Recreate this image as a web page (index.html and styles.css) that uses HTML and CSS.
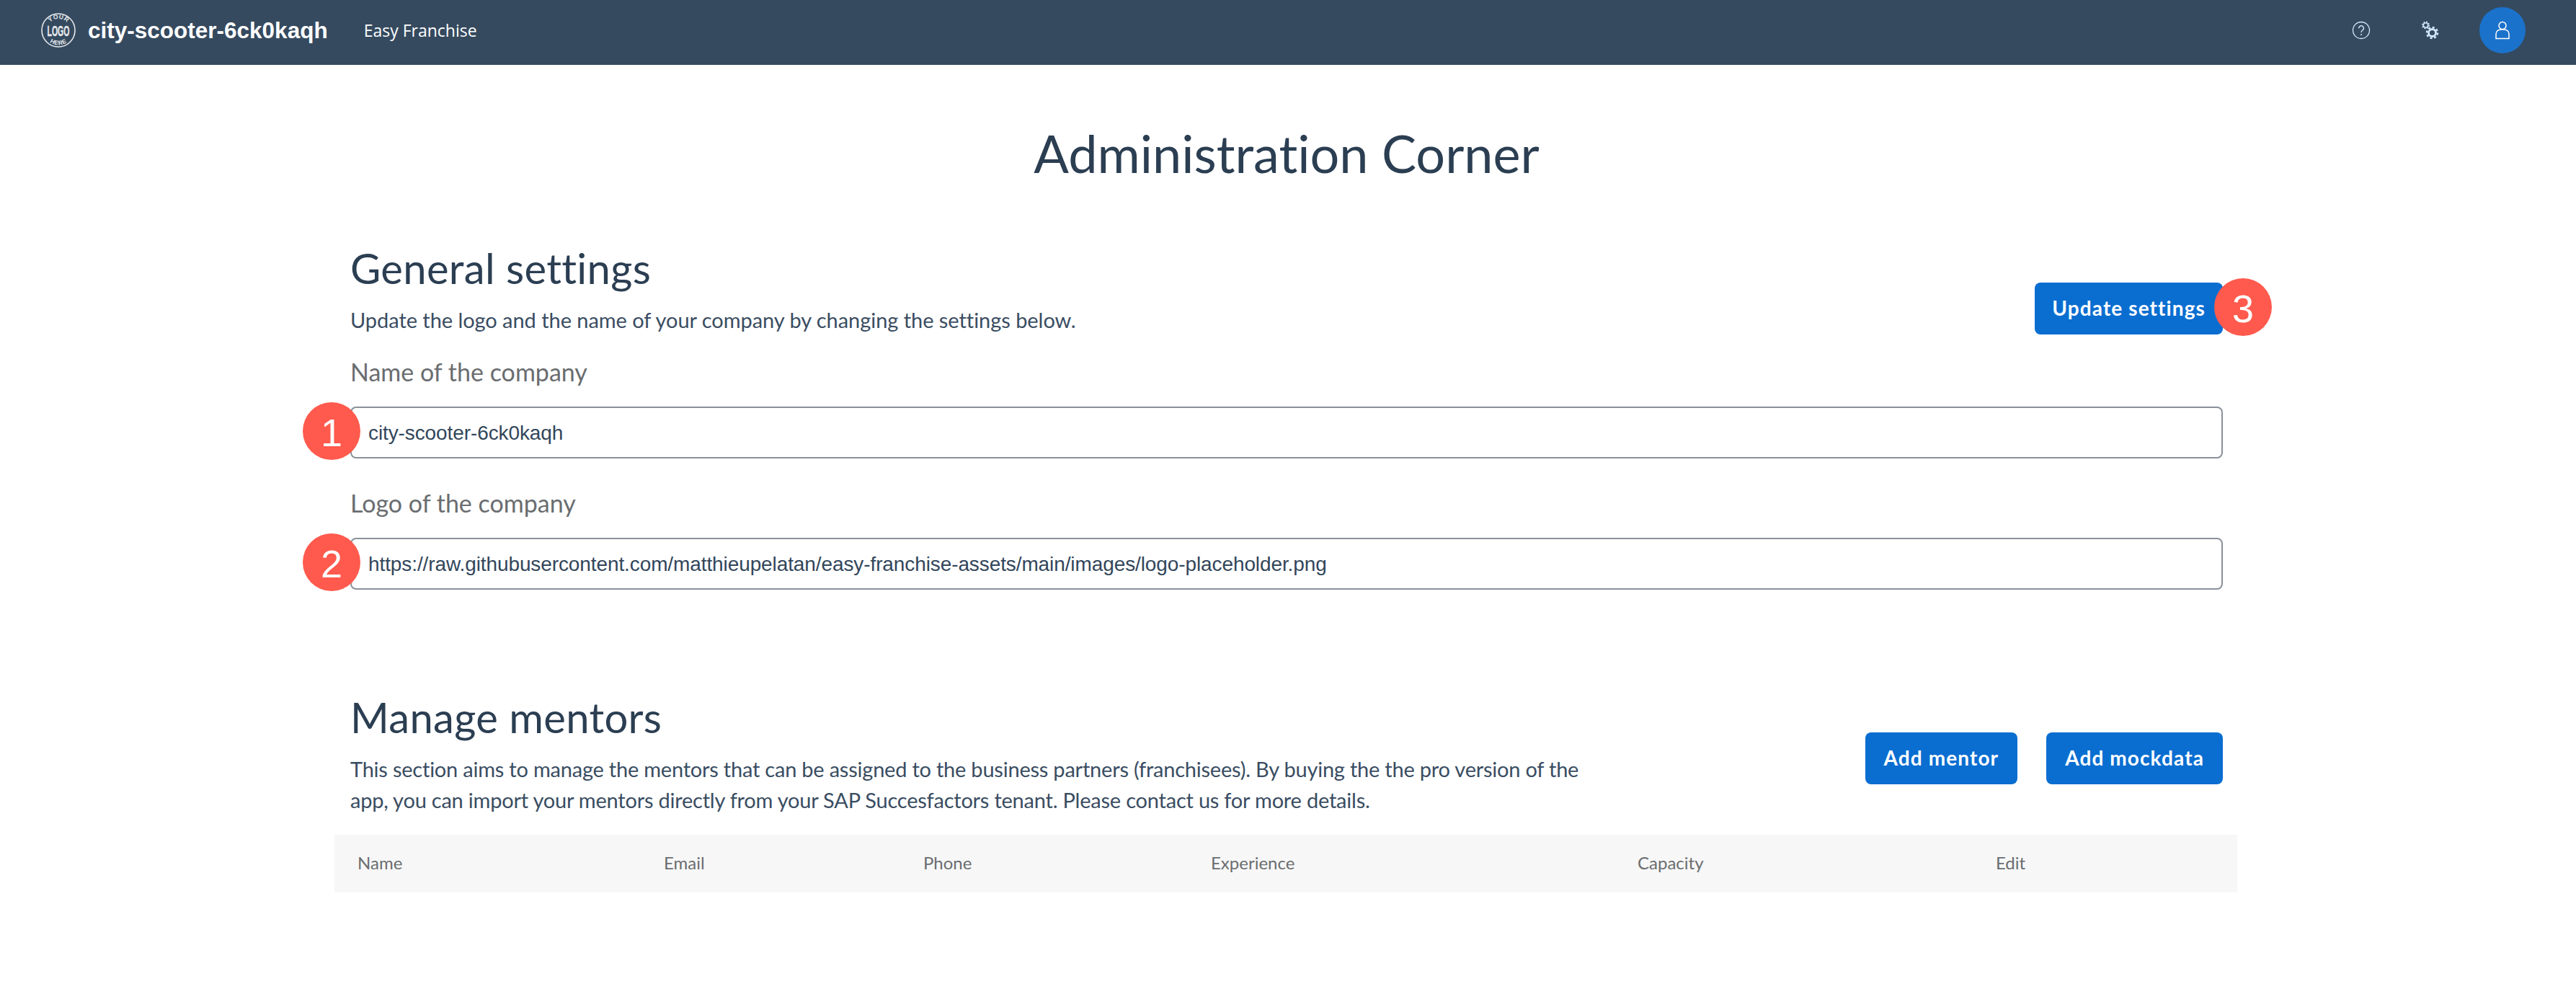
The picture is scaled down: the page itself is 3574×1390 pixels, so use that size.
FILE: index.html
```html
<!DOCTYPE html>
<html lang="en">
<head>
<meta charset="utf-8">
<title>Administration Corner</title>
<link rel="stylesheet" href="styles.css">
</head>
<body>
<header class="shell">
  <div class="brand">
    <svg class="logo" viewBox="0 0 48 48" fill="none">
      <circle cx="24" cy="24" r="23" stroke="#e6e9ec" stroke-width="1.600"/>
      <text class="logo-small" x="12.31 17.44 24.35 30.93" y="12.72 9.04 7.72 9.27" rotate="-36 -12 12 36">YOUR</text>
      <text class="logo-big" transform="translate(8.500 31.500) scale(.5 1)">LOGO</text>
      <text class="logo-small" x="11.95 17.99 24.18 30.79" y="40.88 43.81 44.73 43.55" rotate="27 9 -9 -27">HERE</text>
    </svg>
    <span class="company">city-scooter-6ck0kaqh</span>
    <span class="product">Easy Franchise</span>
  </div>
  <div class="actions">
    <svg class="icon icon-help" viewBox="0 0 26 26" fill="none" stroke="#d1e8ff">
      <circle cx="13" cy="13" r="11.500" stroke-width="1.300"/>
      <path d="M9.600 10.200a3.400 3.400 0 1 1 5.300 2.800c-1.200.8-1.900 1.300-1.900 2.900" stroke-width="1.500"/>
      <circle cx="13" cy="19" r="1" fill="#d1e8ff" stroke="none"/>
    </svg>
    <svg class="icon icon-gears" viewBox="0 0 26 26" fill="none" stroke="#d1e8ff">
      <circle cx="6.500" cy="6" r="3.200" stroke-width="1.500"/>
      <circle cx="6.500" cy="6" r="4.600" stroke-width="1.800" stroke-dasharray="1.800 1.810"/>
      <circle cx="15.500" cy="16.500" r="5" stroke-width="2.800"/>
      <circle cx="15.500" cy="16.500" r="7.500" stroke-width="2.600" stroke-dasharray="3 2.890"/>
    </svg>
    <div class="avatar">
      <svg class="avatar-icon" viewBox="0 0 20 26" fill="none" stroke="#fff" stroke-width="1.500">
        <circle cx="10" cy="6.500" r="5"/>
        <path d="M1 24.500v-6.500a6.500 6 0 0 1 6.500-6h5a6.500 6 0 0 1 6.500 6v6.500z"/>
      </svg>
    </div>
  </div>
</header>

<main class="page">
  <h1 class="page-title">Administration Corner</h1>

  <section class="settings">
    <div class="section-head section-head-end">
      <div>
        <h2 class="section-title">General settings</h2>
        <p class="section-text">Update the logo and the name of your company by changing the settings below.</p>
      </div>
      <div class="head-actions">
        <span class="callout-wrap">
          <button class="btn btn-compact">Update settings</button>
          <span class="badge badge-right">3</span>
        </span>
      </div>
    </div>
    <label class="field">
      <span class="field-label">Name of the company</span>
      <span class="callout-wrap">
        <span class="badge badge-left">1</span>
        <input class="input" value="city-scooter-6ck0kaqh">
      </span>
    </label>
    <label class="field">
      <span class="field-label">Logo of the company</span>
      <span class="callout-wrap">
        <span class="badge badge-left">2</span>
        <input class="input" value="https://raw.githubusercontent.com/matthieupelatan/easy-franchise-assets/main/images/logo-placeholder.png">
      </span>
    </label>
  </section>

  <section class="mentors">
    <div class="section-head">
      <div>
        <h2 class="section-title">Manage mentors</h2>
        <p class="section-text section-text-wrap">This section aims to manage the mentors that can be assigned to the business partners (franchisees). By buying the the pro version of the app, you can import your mentors directly from your SAP Succesfactors tenant. Please contact us for more details.</p>
      </div>
      <div class="head-actions head-actions-gap">
        <button class="btn">Add mentor</button>
        <button class="btn">Add mockdata</button>
      </div>
    </div>
    <div class="table-head">
      <span>Name</span><span>Email</span><span>Phone</span><span>Experience</span><span>Capacity</span><span>Edit</span>
    </div>
  </section>
</main>
</body>
</html>
```

FILE: styles.css
```css
* { box-sizing: border-box; }
html, body { margin: 0; padding: 0; }
body {
  background: #fff;
  color: #3a4d62;
  font-family: "Lato", "Liberation Sans", sans-serif;
  font-variant-ligatures: none;
  width: 3574px;
}

.shell {
  height: 90px;
  background: #354a5f;
  display: flex;
  align-items: center;
  justify-content: space-between;
  padding: 0 70px 6px 57px;
}
.brand { display: flex; align-items: center; }
.logo { width: 48px; height: 48px; margin-right: 17px; }
.logo-small { font: 700 8.500px "Liberation Sans", sans-serif; fill: #e6e9ec; }
.logo-big { font: 700 21px "Liberation Sans", sans-serif; fill: #e6e9ec; stroke: #e6e9ec; stroke-width: .4px; }
.company {
  font: 700 31.500px "Liberation Sans", sans-serif;
  color: #fff;
  margin-right: 50px;
}
.product { font: 400 23px "Open Sans", sans-serif; color: #fff; }

.actions { display: flex; align-items: center; }
.icon { width: 26px; height: 26px; }
.icon-help { margin-right: 70px; }
.icon-gears { margin-right: 55px; }
.avatar {
  width: 64px; height: 64px;
  border-radius: 50%;
  background: #1b72cb;
  display: flex; align-items: center; justify-content: center;
}
.avatar-icon { width: 20px; height: 26px; }

.page { padding: 0 490px 0 486px; }
.page-title {
  margin: 0;
  padding-top: 73px;
  font-size: 72px;
  line-height: 98px;
  font-weight: 400;
  text-align: center;
  color: #2b3e52;
}

.settings { padding-top: 77px; }
.section-head { display: flex; justify-content: space-between; align-items: center; }
.section-head-end { align-items: flex-end; margin-bottom: 29px; }
.section-head-end .head-actions { margin-bottom: 1px; }
.section-title {
  margin: 0;
  font-size: 58px;
  line-height: 68px;
  font-weight: 400;
  letter-spacing: .3px;
  color: #2b3e52;
}
.section-text {
  margin: 16px 0 0;
  font-size: 29px;
  line-height: 43px;
  font-weight: 400;
  letter-spacing: -.05px;
}
.section-text-wrap { width: 1740px; letter-spacing: -.22px; }
.head-actions { display: flex; }
.head-actions-gap { gap: 40px; margin-top: 12px; }

.btn {
  height: 72px;
  padding: 0 26px 3px;
  border: 0;
  border-radius: 8px;
  background: #0a6ed1;
  color: #fff;
  font: 700 28px "Lato", sans-serif;
  letter-spacing: 1.1px;
}
.btn-compact { padding: 0 24px 3px; }

.callout-wrap { position: relative; display: block; }
.badge {
  position: absolute;
  width: 80px; height: 80px;
  border-radius: 50%;
  background: #ff5a4d;
  color: #fff;
  font: 400 54px/85px "Liberation Sans", sans-serif;
  text-align: center;
  top: -6px;
}
.badge-left { left: -66px; z-index: 1; }
.badge-right { right: -68px; }

.field { display: block; margin-bottom: 40px; }
.field-label {
  display: block;
  font-size: 34px;
  line-height: 44px;
  font-weight: 400;
  color: #6a6d70;
  margin-bottom: 26px;
}
.input {
  display: block;
  width: 100%;
  height: 72px;
  padding: 2px 23px 0;
  border: 2px solid #89919a;
  border-radius: 8px;
  background: #fff;
  color: #32465b;
  font: 400 28px "Liberation Sans", sans-serif;
  letter-spacing: -.1px;
}

.mentors { padding-top: 103px; }
.table-head {
  display: grid;
  grid-template-columns: 425px 360px 399px 592px 497px 367px;
  height: 80px;
  padding-bottom: 4px;
  margin: 27px -20px 0 -22px;
  background: #f7f7f7;
  align-items: center;
  font-size: 24px;
  color: #6a6d70;
}
.table-head span { padding-left: 32px; }
```
